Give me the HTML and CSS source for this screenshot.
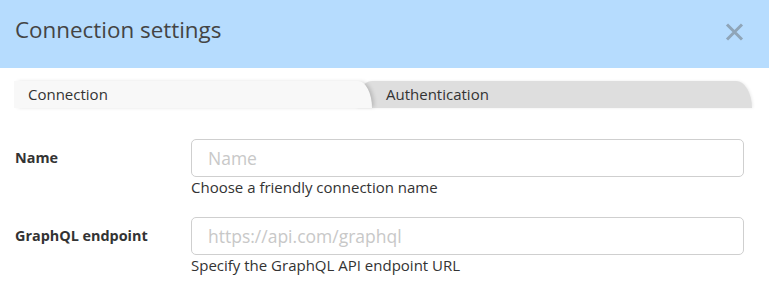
FILE: index.html
```html
<!DOCTYPE html>
<html>
<head>
<meta charset="utf-8">
<link rel="stylesheet" href="styles.css">
</head>
<body>
<div class="dialog">
  <div class="header">
    <h1 class="title">Connection settings</h1>
    <button class="close" aria-label="Close">
      <svg width="19" height="18" viewBox="0 0 19 18"><path d="M2 1.5 L17 16.5 M17 1.5 L2 16.5" stroke="#8fa5b8" stroke-width="3" stroke-linecap="butt"/></svg>
    </button>
  </div>
  <div class="tabs">
    <div class="tab tab-active">Connection</div>
    <div class="tab tab-inactive">Authentication</div>
  </div>
  <div class="form">
    <div class="row">
      <label class="label">Name</label>
      <div class="field">
        <input class="input" type="text" placeholder="Name">
        <div class="help">Choose a friendly connection name</div>
      </div>
    </div>
    <div class="row">
      <label class="label">GraphQL endpoint</label>
      <div class="field">
        <input class="input" type="text" placeholder="https://api.com/graphql">
        <div class="help">Specify the GraphQL API endpoint URL</div>
      </div>
    </div>
  </div>
</div>
</body>
</html>
```
FILE: styles.css
```css
* { box-sizing: border-box; }
html, body { margin: 0; padding: 0; background: #fff; }
body { font-family: "Open Sans", "Liberation Sans", sans-serif; color: #333; }

.header {
  height: 68px;
  background: #b6dcfe;
  display: flex;
  align-items: center;
  justify-content: space-between;
  padding: 0 25px 0 15px;
}
.title {
  margin: 0;
  font-size: 22.4px;
  font-weight: 400;
  color: #444;
  line-height: 30px;
  padding-bottom: 8px;
}
.close {
  border: 0;
  background: none;
  padding: 0;
  width: 19px;
  height: 18px;
  display: flex;
  margin-bottom: 5px;
}

.tabs {
  display: flex;
  margin: 13px 0 0 14px;
  height: 27px;
}
.tab {
  font-size: 15px;
  line-height: 27px;
  height: 27px;
  color: #333;
}
.tab-active {
  position: relative;
  z-index: 2;
  width: 358px;
  background: #f8f8f8;
  padding-left: 14px;
  border-top-right-radius: 14px 27px;
  box-shadow: 3px 0 4px -1px rgba(0,0,0,0.18);
}
.tab-inactive {
  position: relative;
  z-index: 1;
  width: 396px;
  margin-left: -16px;
  padding-left: 30px;
  background: #dedede;
  border-top-left-radius: 16px 27px;
  border-top-right-radius: 16px 27px;
  box-shadow: 1px 0 3px rgba(0,0,0,0.08);
}

.form {
  padding: 31px 25px 0 15px;
}
.row {
  display: flex;
  align-items: flex-start;
  margin-bottom: 20px;
}
.label {
  width: 176px;
  flex: none;
  font-weight: 700;
  font-size: 14.4px;
  line-height: 38px;
  color: #333;
}
.field {
  flex: 1;
  display: flex;
  flex-direction: column;
}
.input {
  height: 38px;
  width: 100%;
  border: 1px solid #cfcfcf;
  border-radius: 5px;
  padding: 0 16px;
  font-family: "Open Sans", "Liberation Sans", sans-serif;
  font-size: 17.5px;
  color: #333;
  background: #fff;
  outline: none;
}
.input::placeholder { color: #c8c8c8; }
.help {
  font-size: 15px;
  line-height: 20px;
  color: #333;
}
```
